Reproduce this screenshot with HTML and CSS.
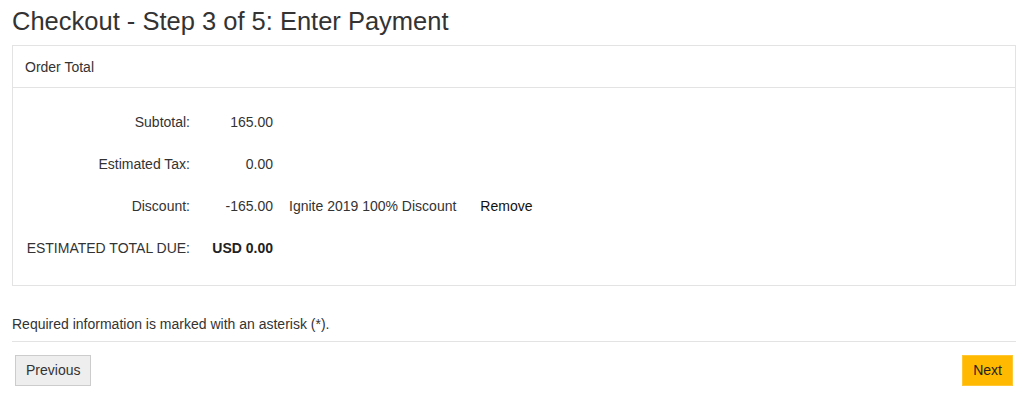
FILE: index.html
```html
<!DOCTYPE html>
<html lang="en">
<head>
  <meta charset="UTF-8">
  <meta name="viewport" content="width=device-width, initial-scale=1.0">
  <title>Checkout - Enter Payment</title>
  <link rel="stylesheet" href="styles.css">
</head>
<body>
  <div class="page">
    <h1>Checkout - Step 3 of 5: Enter Payment</h1>

    <div class="panel">
      <div class="panel-heading">Order Total</div>
      <div class="panel-body">
        <div class="totals">
          <div class="label">Subtotal:</div>
          <div class="amount">165.00</div>
          <div class="note"></div>
          <div class="action"></div>

          <div class="label">Estimated Tax:</div>
          <div class="amount">0.00</div>
          <div class="note"></div>
          <div class="action"></div>

          <div class="label">Discount:</div>
          <div class="amount">-165.00</div>
          <div class="note">Ignite 2019 100% Discount</div>
          <div class="action"><a href="#" class="remove">Remove</a></div>

          <div class="label">ESTIMATED TOTAL DUE:</div>
          <div class="amount total">USD 0.00</div>
          <div class="note"></div>
          <div class="action"></div>
        </div>
      </div>
    </div>

    <p class="required">Required information is marked with an asterisk (*).</p>

    <div class="nav">
      <button class="btn btn-default">Previous</button>
      <button class="btn btn-primary">Next</button>
    </div>
  </div>
</body>
</html>
```

FILE: styles.css
```css
/* base */
body {
  margin: 0;
  font-family: "Liberation Sans", Arial, sans-serif;
  font-size: 14px;
  color: #333;
  background: #fff;
}
.page {
  width: 1004px;
  margin-left: 12px;
}
h1 {
  margin: 0;
  padding-top: 6px;
  height: 39px;
  font-size: 25.5px;
  font-weight: normal;
  line-height: 30px;
  color: #333;
}

/* order total panel */
.panel {
  border: 1px solid #e3e3e3;
}
.panel-heading {
  padding: 11px 12px 10px;
  line-height: 20px;
  border-bottom: 1px solid #e3e3e3;
}
.panel-body {
  padding: 13px 12px 16px;
}
.totals {
  display: grid;
  grid-template-columns: 165px 83px max-content max-content;
  grid-auto-rows: 42px;
  align-items: center;
  justify-content: start;
}
.label {
  text-align: right;
}
.amount {
  text-align: right;
}
.total {
  font-weight: bold;
  color: #222;
}
.note {
  padding-left: 16px;
}
.action {
  padding-left: 24px;
}
.remove {
  color: #111;
  text-decoration: none;
}

/* footer */
.required {
  margin: 0;
  padding: 28px 0 7px;
  line-height: 20px;
  border-bottom: 1px solid #e3e3e3;
}
.nav {
  display: flex;
  justify-content: space-between;
  padding: 13px 3px 0;
}
.btn {
  font-family: inherit;
  font-size: 14px;
  line-height: 19px;
  padding: 5px 10px;
  border: 1px solid #ccc;
  color: #333;
  cursor: pointer;
}
.btn-default {
  background: #eee;
}
.btn-primary {
  background: #ffb900;
  border-color: #ffc733;
  color: #222;
}
```
